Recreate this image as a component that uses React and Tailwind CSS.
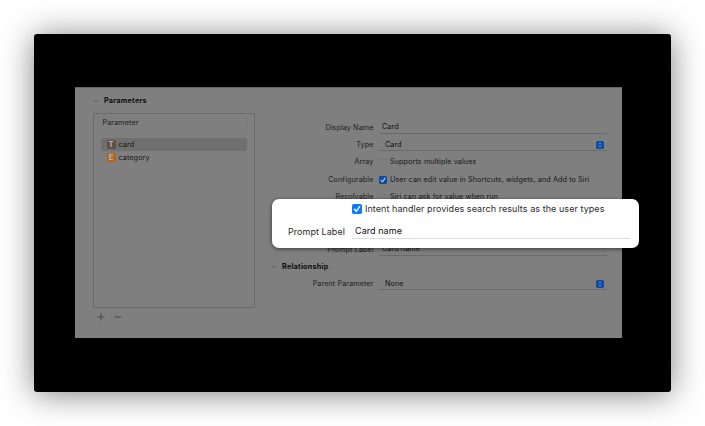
import React from "react";

function Chevron({ className }) {
  return (
    <svg className={className} width="6" height="4" viewBox="0 0 6 4" fill="none">
      <path d="M0.7 0.7 L3 3 L5.3 0.7" stroke="#4c4c4c" strokeWidth="0.7" />
    </svg>
  );
}

function Check({ size, color }) {
  return (
    <svg width={size} height={size} viewBox="0 0 10 10" className="shrink-0">
      <rect width="10" height="10" rx="1.8" fill={color} />
      <path d="M2.5 5.3 L4.3 7.4 L7.6 2.6" fill="none" stroke="currentColor" strokeWidth="1.4" strokeLinecap="round" strokeLinejoin="round" />
    </svg>
  );
}

function Stepper() {
  return (
    <svg width="8" height="8" viewBox="0 0 8 8" className="shrink-0">
      <rect width="8" height="8" rx="1.8" fill="#0a4ba8" />
      <path d="M2.6 3.1 L4 1.8 L5.4 3.1 M2.6 4.9 L4 6.2 L5.4 4.9" fill="none" stroke="#8fa3bd" strokeWidth="0.8" />
    </svg>
  );
}

function Row({ label, children }) {
  return (
    <div className="flex h-[17.4px] items-center">
      <div className="w-[101.5px] shrink-0 text-right text-[#1d1d1d]">{label}</div>
      <div className="ml-[5.5px] flex h-full min-w-0 flex-1 items-center">{children}</div>
    </div>
  );
}

function Field({ children, select }) {
  return (
    <div className={"flex h-[12px] w-[228px] items-center border-b border-[#6a6a6a] pr-[3px] " + (select ? "pl-[6px]" : "pl-[3px]")}>
      <span className="flex-1 text-[#111]">{children}</span>
      {select && <Stepper />}
    </div>
  );
}

function EmptyBox() {
  return <span className="h-[7px] w-[8px] shrink-0 rounded-[1px] border-t border-[#757575]" />;
}

function Item({ letter, name, badge, selected }) {
  return (
    <div className={"flex h-[13px] items-center rounded-[2px] pl-[6px] " + (selected ? "bg-[#6f6f6f]" : "")}>
      <span className={"flex h-[9px] w-[9px] items-center justify-center rounded-[1.5px] text-[7.5px] leading-none font-bold tracking-normal text-[#b4b4b4] " + badge}>{letter}</span>
      <span className="ml-[3px] text-[#161616]">{name}</span>
    </div>
  );
}

export default function App() {
  return (
    <div className="h-[426px] w-[705px] overflow-hidden bg-white p-[34px] font-['Inter',sans-serif] text-[7.2px] leading-[10px] tracking-[0.11px] whitespace-nowrap">
      <div className="relative h-[358px] w-[637px] rounded-[3px] bg-black pt-[53px] pl-[41px] shadow-[0_2px_32px_rgba(0,0,0,0.5)]">
        <div className="flex h-[251px] w-[547px] border-t border-[#666] bg-[#7f7f7f] pl-[17.5px]">
          <div className="w-[162px]">
            <div className="flex h-[25px] items-center text-[7.2px] font-bold tracking-[0.25px] text-[#0c0c0c]">
              <Chevron />
              <span className="ml-[5.5px]">Parameters</span>
            </div>
            <div className="h-[195px] border border-[#696969] px-[7px] pt-[4px]">
              <div className="mb-[10px] flex h-[10px] items-center border-r border-[#767676] pl-[2px] text-[#1d1d1d]">Parameter</div>
              <Item letter="T" name="card" badge="bg-[#5f4f47]" selected />
              <Item letter="E" name="category" badge="bg-[#b3661a]" />
            </div>
            <div className="flex h-[18px] items-center gap-[9px] pl-[4px]">
              <svg width="8" height="8" viewBox="0 0 8 8"><path d="M0.5 4 H7.5 M4 0.5 V7.5" stroke="#3c3c3c" strokeWidth="0.8" /></svg>
              <svg width="8" height="8" viewBox="0 0 8 8"><path d="M0.5 4 H7.5" stroke="#3c3c3c" strokeWidth="0.8" /></svg>
            </div>
          </div>
          <div className="ml-[17.5px] w-[336px] pt-[31px]">
            <Row label="Display Name"><Field>Card</Field></Row>
            <Row label="Type"><Field select>Card</Field></Row>
            <Row label="Array"><EmptyBox /><span className="ml-[3px] text-[#161616]">Supports multiple values</span></Row>
            <Row label="Configurable"><span className="flex text-[#c4c9d0]"><Check size={8} color="#0a4ba8" /></span><span className="ml-[3px] text-[#161616]">User can edit value in Shortcuts, widgets, and Add to Siri</span></Row>
            <Row label="Resolvable"><EmptyBox /><span className="ml-[3px] text-[#161616]">Siri can ask for value when run</span></Row>
            <div className="h-[35px]" />
            <Row label="Prompt Label"><Field>Card name</Field></Row>
            <div className="-ml-[1.5px] flex h-[17px] items-center text-[7.2px] font-bold tracking-[0.25px] text-[#0c0c0c]">
              <Chevron />
              <span className="ml-[5.5px]">Relationship</span>
            </div>
            <Row label="Parent Parameter"><Field select>None</Field></Row>
          </div>
        </div>
        <div className="absolute top-[165px] left-[238px] h-[49px] w-[367px] rounded-[7px] bg-white pt-[4px] text-[9px] leading-[12px] tracking-[0.06px] text-[#2b2b2b] shadow-[0_1px_4px_rgba(0,0,0,0.55)]">
          <div className="flex h-[12px] items-center pl-[80px] text-white">
            <Check size={10} color="#0a7aff" />
            <span className="ml-[3px] text-[#2b2b2b]">Intent handler provides search results as the user types</span>
          </div>
          <div className="mt-[8px] flex h-[16px] items-center">
            <span className="w-[73px] pt-[1px] text-right">Prompt Label</span>
            <span className="ml-[7px] h-[15px] w-[278px] border-b border-[#dedede] pl-[3px] leading-[14px] text-[#111]">Card name</span>
          </div>
        </div>
      </div>
    </div>
  );
}
